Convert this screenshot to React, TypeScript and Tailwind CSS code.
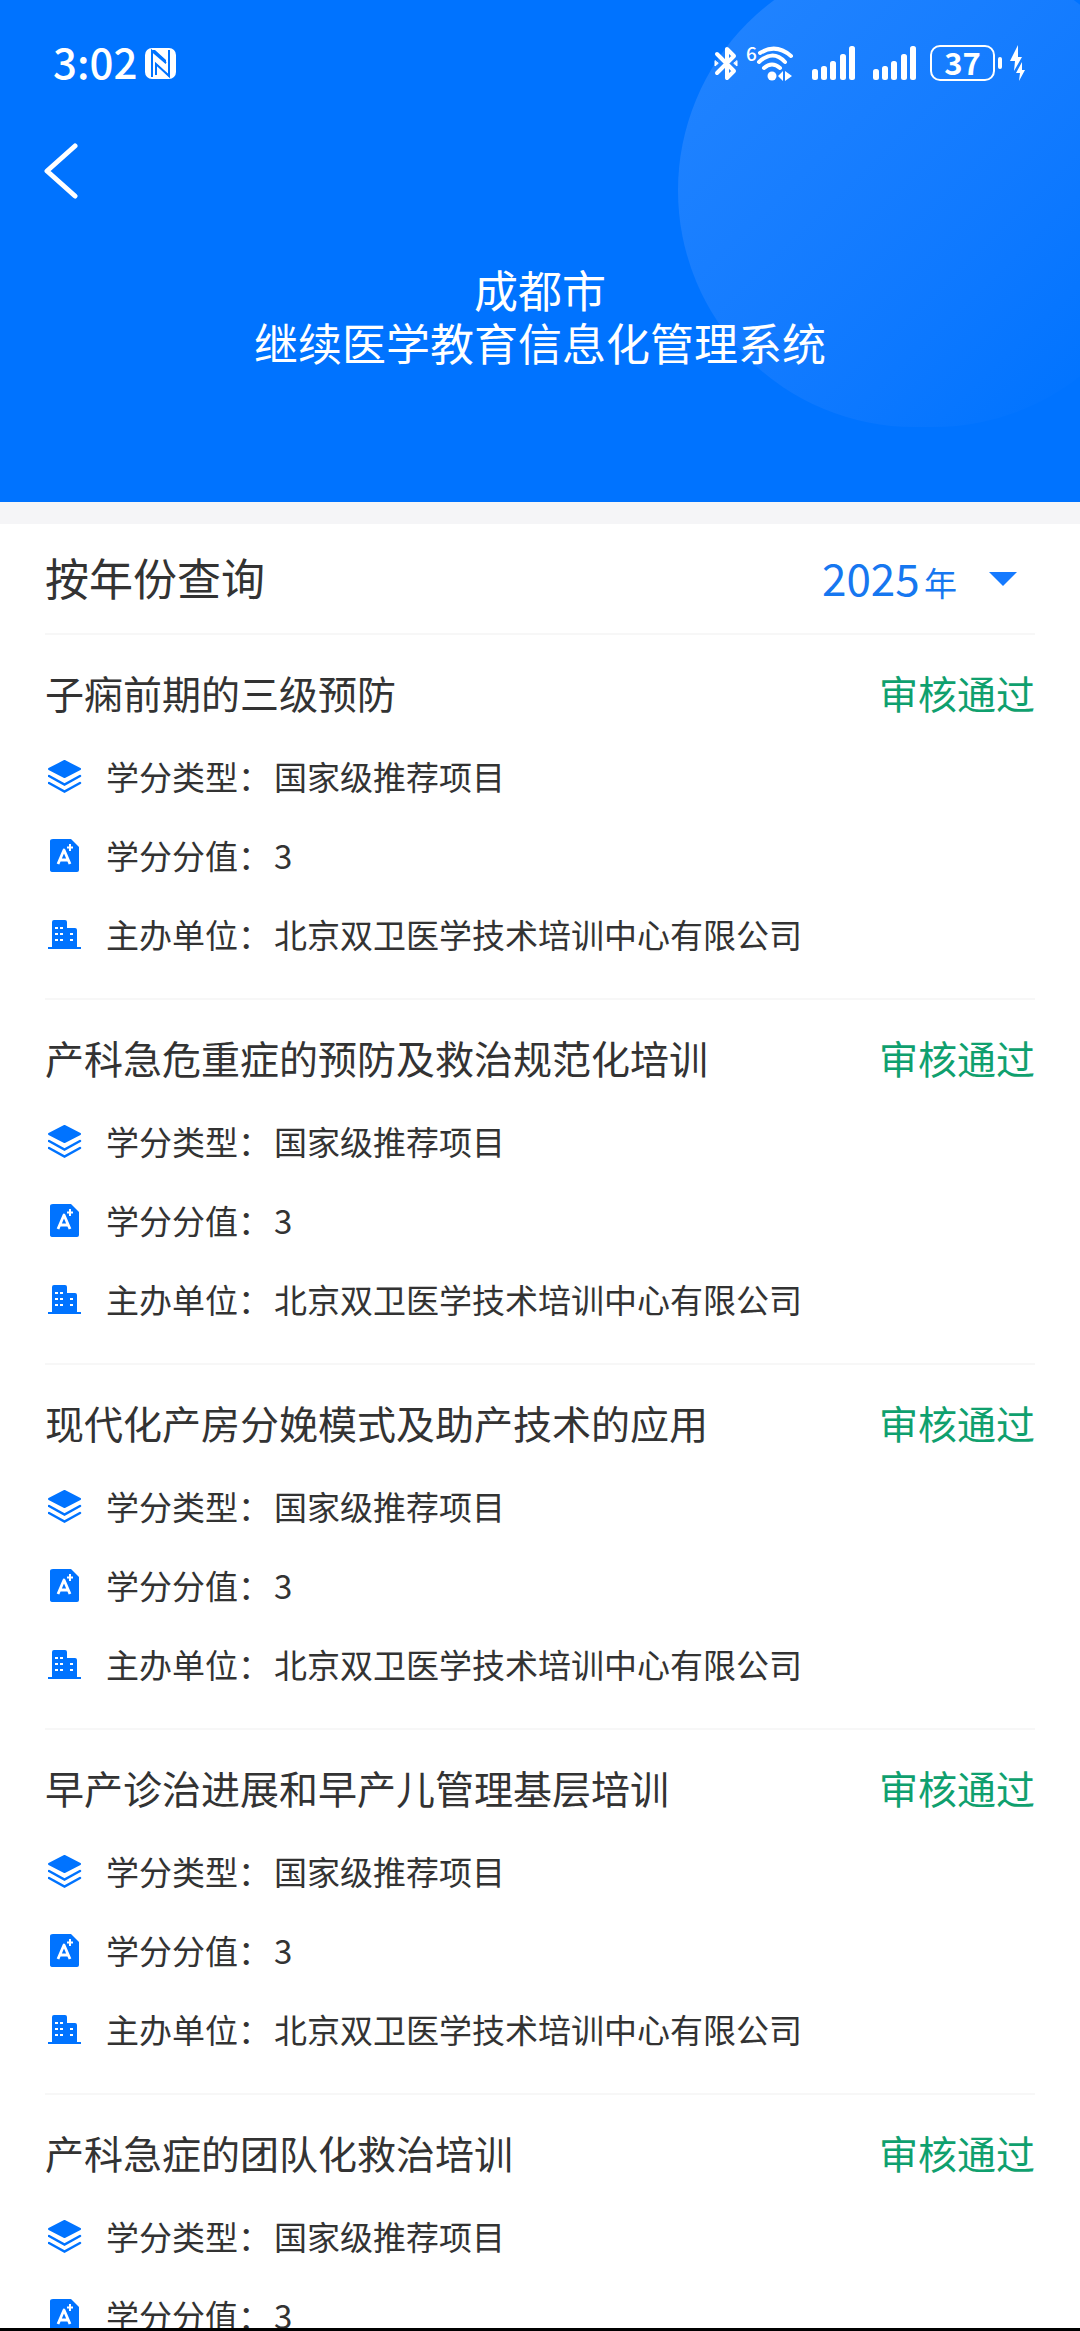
import React, { useState } from 'react';

type Course = {
  id: number;
  title: string;
  status: string;
  creditType: string;
  credits: number;
  organizer: string;
};

const YEARS = ['2025', '2024', '2023'];

const TITLES = [
  '子痫前期的三级预防',
  '产科急危重症的预防及救治规范化培训',
  '现代化产房分娩模式及助产技术的应用',
  '早产诊治进展和早产儿管理基层培训',
  '产科急症的团队化救治培训',
];

const COURSES: Course[] = TITLES.map((title, index) => ({
  id: index + 1,
  title,
  status: '审核通过',
  creditType: '国家级推荐项目',
  credits: 3,
  organizer: '北京双卫医学技术培训中心有限公司',
}));

const NfcIcon = () => (
  <svg width="31" height="31" viewBox="0 0 31 31" aria-hidden="true">
    <rect width="31" height="31" rx="7" fill="#fff" />
    <path d="M7 29V3L21 15M24 2V28L11 16V27" fill="none" stroke="#0073ff" strokeWidth="2" />
    <path d="M7 2H10L21 12V16ZM11 15L24 27V29Z" fill="#0073ff" />
  </svg>
);

const BluetoothIcon = () => (
  <svg width="24" height="35" viewBox="0 0 24 35" fill="none" stroke="#fff" strokeWidth="4" strokeLinejoin="round" strokeLinecap="round" aria-hidden="true">
    <path d="M3 8L20 25L13 32V22M3 27L20 10L13 3V13" />
    <path d="M1 15V20L4 17.500ZM23 15V20L20 17.500Z" fill="#fff" strokeWidth="1" />
  </svg>
);

const WifiIcon = () => (
  <svg width="48" height="35" viewBox="0 0 48 35" fill="none" stroke="#fff" strokeWidth="4" strokeLinecap="round" className="overflow-visible" aria-hidden="true">
    <text x="0" y="15" fill="#fff" stroke="none" fontSize="19" fontWeight="500">6</text>
    <path d="M14 7Q30 -3 45 10" />
    <path d="M13 16Q27 3 39 16" />
    <path d="M18 22Q26 15 34 22" />
    <circle cx="26" cy="30" r="4.500" fill="#fff" stroke="none" />
    <path d="M32 30L37 25V35ZM39 25L46 30L39 35Z" fill="#fff" stroke="none" />
  </svg>
);

const SignalIcon = () => (
  <svg width="43" height="34" viewBox="0 0 43 34" fill="#fff" aria-hidden="true">
    <rect x="0" y="23" width="6" height="11" rx="2.500" />
    <rect x="9" y="20" width="6" height="14" rx="2.500" />
    <rect x="18" y="15" width="6" height="19" rx="2.500" />
    <rect x="28" y="8" width="6" height="26" rx="2.500" />
    <rect x="37" y="0" width="6" height="34" rx="2.500" />
  </svg>
);

const ChargingIcon = () => (
  <svg width="15" height="36" viewBox="0 0 15 36" fill="#fff" aria-hidden="true">
    <path d="M8 0L0 16H5L4 26L12 12H8Z" />
    <path d="M12 17L6 28H10L9 36L15 25H12Z" />
  </svg>
);

const LayersIcon = () => (
  <svg width="34" height="34" viewBox="0 0 34 34" aria-hidden="true">
    <path d="M16.500 1L32 9L16.500 17L1 9Z" fill="#0073ff" stroke="#0073ff" strokeWidth="2" strokeLinejoin="round" />
    <path d="M1 16L16.500 24.500L32 16M1 23L16.500 31.500L32 23" fill="none" stroke="#0073ff" strokeWidth="2.500" strokeLinecap="round" />
  </svg>
);

const GradeIcon = () => (
  <svg width="34" height="34" viewBox="0 0 34 34" aria-hidden="true">
    <path d="M5 0H23L31 8V31Q31 33 29 33H5Q2 33 2 31V2Q2 0 5 0Z" fill="#0073ff" />
    <path d="M10 25L16 11L22 25M12 21H20" fill="none" stroke="#fff" strokeWidth="2.800" strokeLinejoin="round" />
    <path d="M22 5V12M19 8.500H25" stroke="#fff" strokeWidth="2" />
  </svg>
);

const BuildingIcon = () => (
  <svg width="34" height="34" viewBox="0 0 34 34" aria-hidden="true">
    <path d="M0 29H4V4Q4 2 6 2H17Q19 2 19 4V10H27Q29 10 29 12V29H33V31H0Z" fill="#0073ff" />
    <path d="M7 10H10M12 10H15M7 16H10M12 16H15M7 22H10M12 22H15M22 16H25M22 22H25" stroke="#fff" strokeWidth="2" />
  </svg>
);

const StatusBar = () => (
  <div className="flex items-center justify-between pt-[35px] pr-[55px] pl-[53px]">
    <div className="flex items-center gap-2">
      <span className="pb-1 text-[42px] leading-[52px] font-medium">3:02</span>
      <NfcIcon />
    </div>
    <div className="flex items-center">
      <BluetoothIcon />
      <div className="ml-2 flex items-center gap-[18px]">
        <WifiIcon />
        <SignalIcon />
        <SignalIcon />
      </div>
      <div className="ml-[14px] flex h-[36px] w-[65px] items-center justify-center rounded-[10px] border-2 border-white pb-0.5 text-[31px] leading-[30px] font-bold">
        37
      </div>
      <div className="mr-2 ml-[3px] h-3 w-[4px] rounded-full bg-white" />
      <ChargingIcon />
    </div>
  </div>
);

const Header = () => (
  <header className="relative h-[502px] shrink-0 overflow-hidden bg-[#0073ff] text-white">
    <div className="absolute -top-[46px] -right-[90px] h-[473px] w-[492px] rounded-full bg-linear-to-br from-[#2385ff] to-[#0073ff] to-90%" />
    <div className="relative">
      <StatusBar />
      <button type="button" aria-label="返回" className="mt-[52px] ml-[44px] block">
        <svg width="34" height="56" viewBox="0 0 34 56" fill="none" stroke="#fff" strokeWidth="5" strokeLinecap="round" strokeLinejoin="round" aria-hidden="true">
          <path d="M31 3L3 28L31 53" />
        </svg>
      </button>
      <h1 className="mt-16 text-center text-[44px] leading-[53px]">
        成都市
        <br />
        继续医学教育信息化管理系统
      </h1>
    </div>
  </header>
);

const YearFilter: React.FC<{ year: string; onChange: (year: string) => void }> = ({ year, onChange }) => (
  <div className="flex h-[111px] items-center justify-between border-b-2 border-[#f7f7f7] pb-1 text-[44px]">
    <label htmlFor="year">按年份查询</label>
    <div className="flex items-center pr-[18px] text-[#1677f0]">
      <div className="flex items-baseline gap-1">
        <select
          id="year"
          value={year}
          onChange={e => onChange(e.target.value)}
          className="appearance-none bg-transparent outline-none"
        >
          {YEARS.map(y => (
            <option key={y} value={y}>{y}</option>
          ))}
        </select>
        <span className="text-[33px]">年</span>
      </div>
      <svg className="mt-1 ml-8" width="28" height="14" viewBox="0 0 28 14" fill="#157aff" aria-hidden="true">
        <path d="M0 0H28L14 14Z" />
      </svg>
    </div>
  </div>
);

const DetailRow: React.FC<{ icon: React.ReactNode; label: string; value: string | number }> = ({ icon, label, value }) => (
  <div className="flex h-[79px] items-center pb-0.5 text-[33px]">
    <dt className="flex w-[229px] items-center gap-6 pl-[3px]">
      {icon}
      {label}：
    </dt>
    <dd>{value}</dd>
  </div>
);

const CourseItem: React.FC<{ course: Course }> = ({ course }) => (
  <li className="border-b-2 border-[#f7f7f7] pt-4 pb-[23px]">
    <div className="flex h-[87px] items-center justify-between pb-1 text-[39px]">
      <h2>{course.title}</h2>
      <span className="text-[#0fa06e]">{course.status}</span>
    </div>
    <dl>
      <DetailRow icon={<LayersIcon />} label="学分类型" value={course.creditType} />
      <DetailRow icon={<GradeIcon />} label="学分分值" value={course.credits} />
      <DetailRow icon={<BuildingIcon />} label="主办单位" value={course.organizer} />
    </dl>
  </li>
);

export default function App() {
  const [year, setYear] = useState(YEARS[0]);

  return (
    <div className="flex h-screen flex-col bg-white font-['Noto_Sans_CJK_SC',sans-serif] text-[#333]">
      <Header />
      <div className="h-[22px] shrink-0 bg-[#f5f5f7]" />
      <main className="min-h-0 flex-1 overflow-y-auto px-[45px] [scrollbar-width:none]">
        <YearFilter year={year} onChange={setYear} />
        <ul>
          {COURSES.map(course => (
            <CourseItem key={course.id} course={course} />
          ))}
        </ul>
      </main>
      <div className="h-[3px] shrink-0 bg-black" />
    </div>
  );
}
